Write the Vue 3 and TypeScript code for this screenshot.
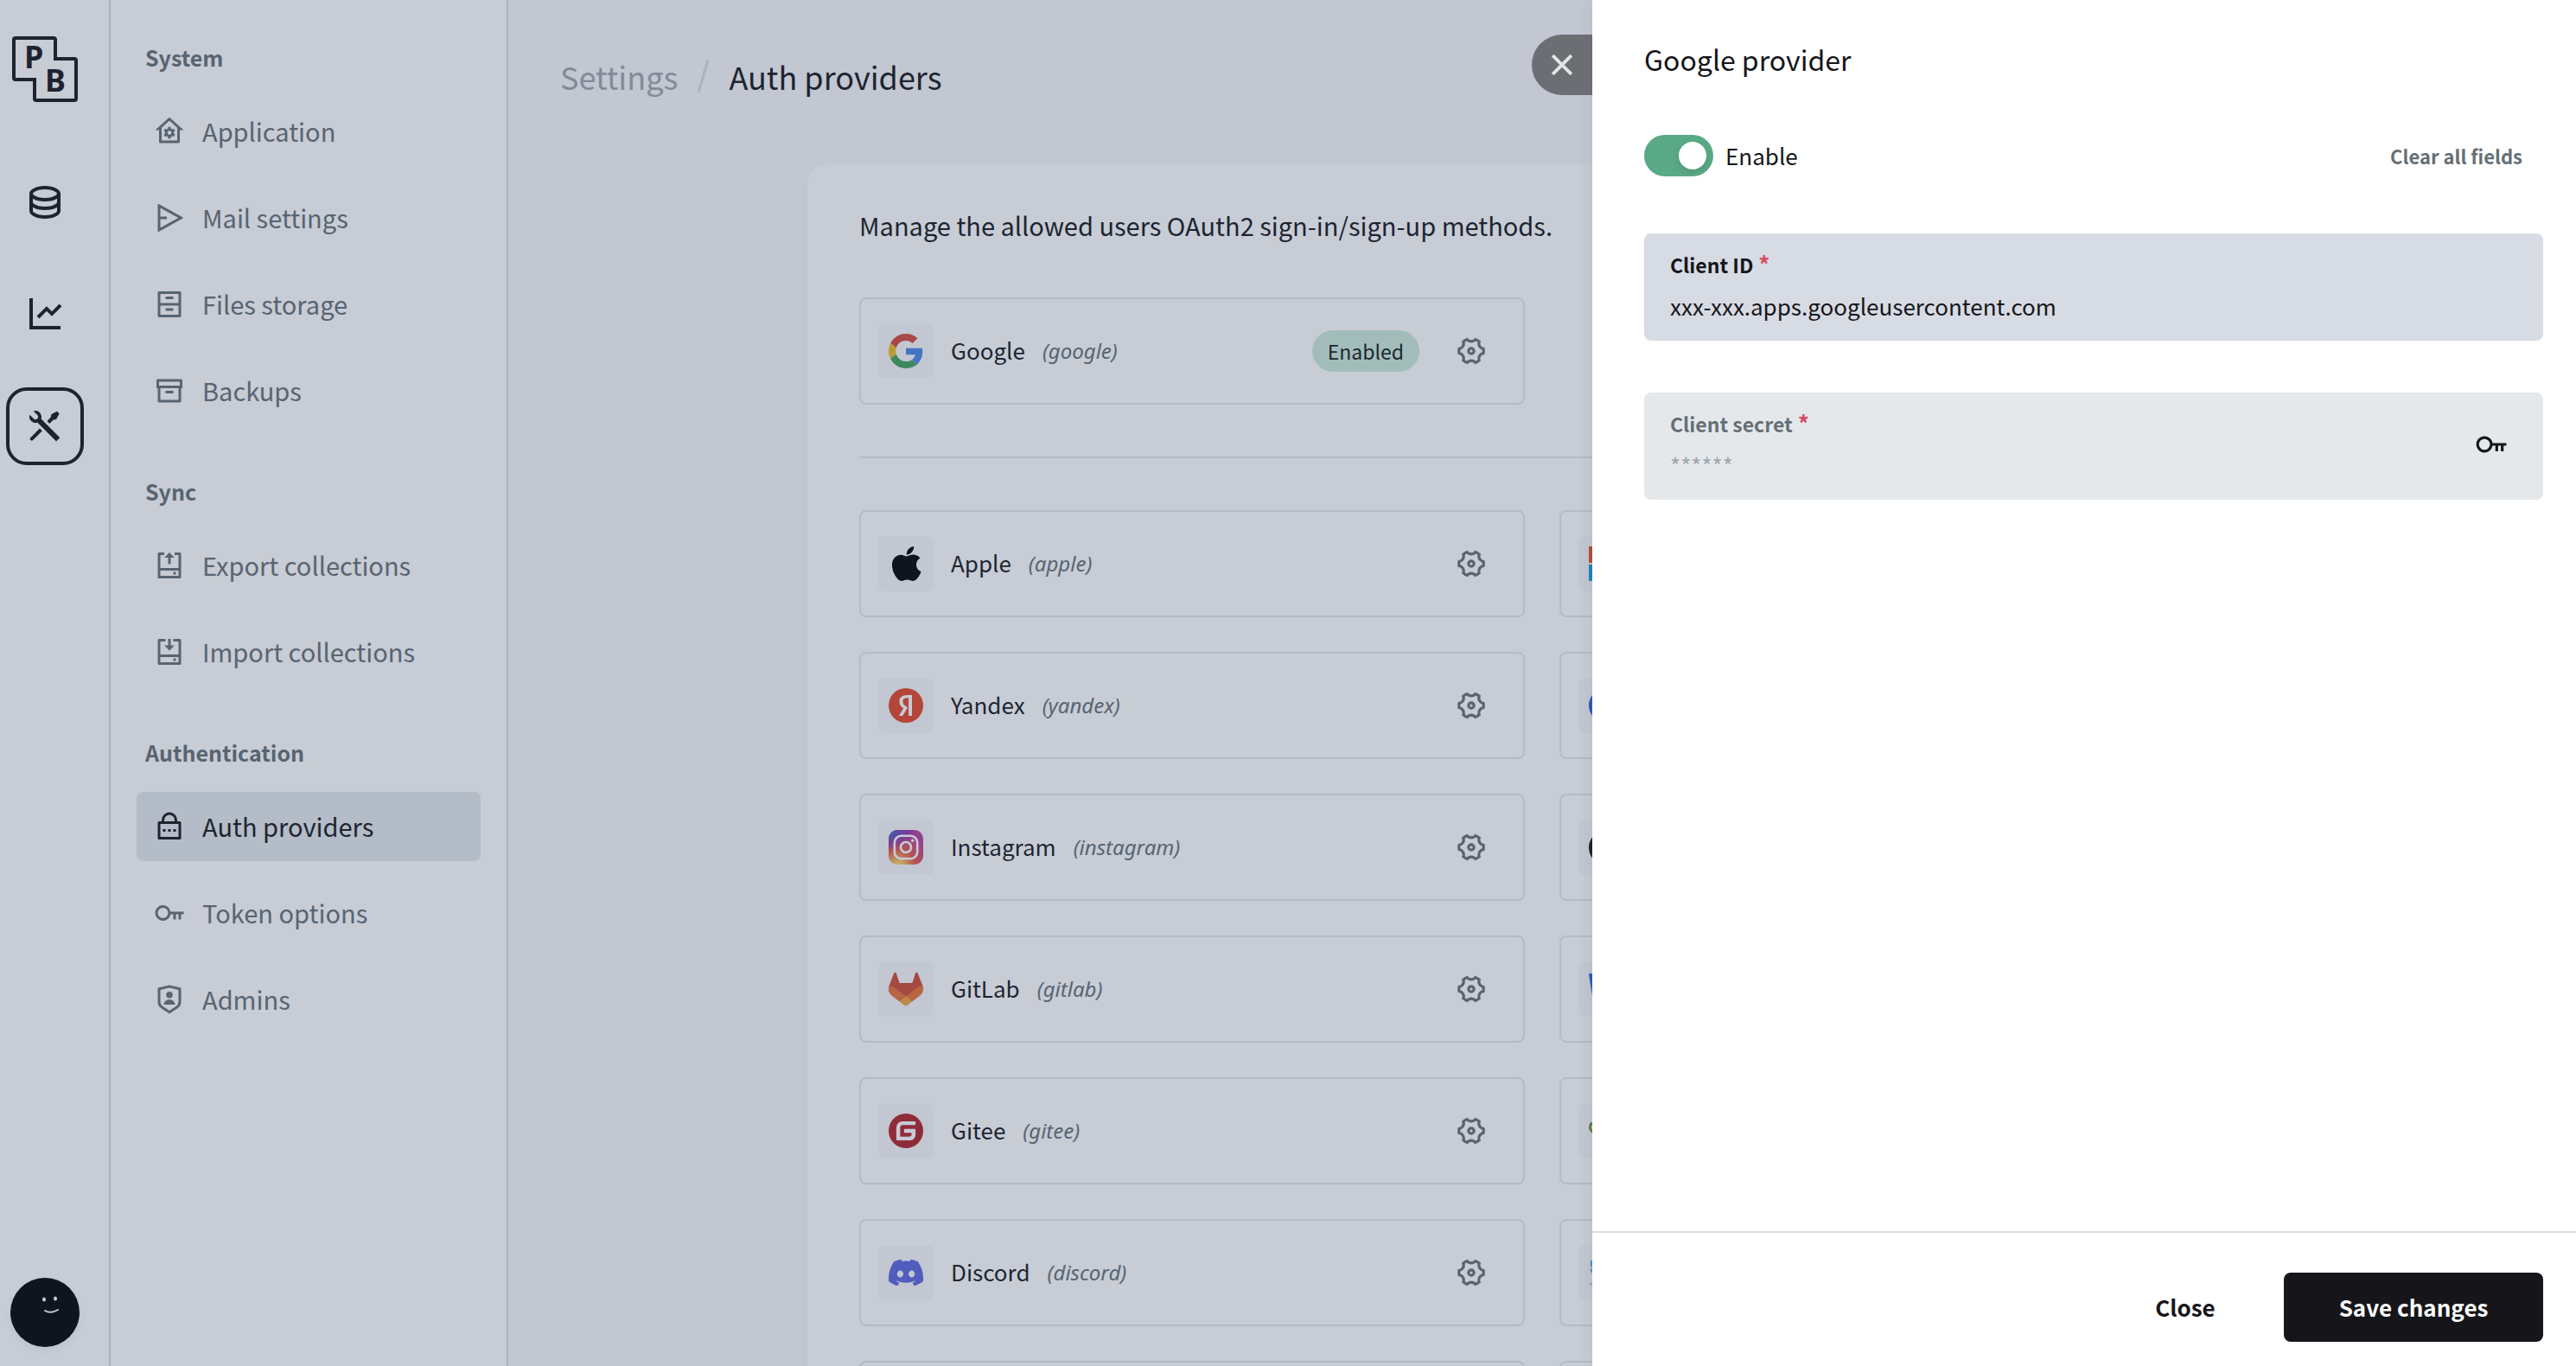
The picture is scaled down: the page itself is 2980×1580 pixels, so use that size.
<script setup lang="ts">
import { ref } from 'vue'

interface Shape {
  d: string
  fill: string
}

interface Provider {
  title: string
  key: string
  viewBox: string
  shapes: Shape[]
  enabled?: boolean
}

interface NavItem {
  label: string
  icon: string
  active?: boolean
}

interface NavGroup {
  title: string
  items: NavItem[]
}

const keyIcon =
  'M12.917 13A6.002 6.002 0 0 1 1 12a6 6 0 0 1 11.917-1H23v2h-2v4h-2v-4h-2v4h-2v-4h-2.083zM7 16a4 4 0 1 0 0-8 4 4 0 0 0 0 8z'

const gearIcon =
  'M2 12c0-.865.11-1.703.316-2.504A3 3 0 0 0 4.99 4.867a9.99 9.99 0 0 1 4.335-2.505 3 3 0 0 0 5.348 0 9.99 9.99 0 0 1 4.335 2.505 3 3 0 0 0 2.675 4.63c.206.8.316 1.638.316 2.503 0 .865-.11 1.703-.316 2.504a3 3 0 0 0-2.675 4.629 9.99 9.99 0 0 1-4.335 2.505 3 3 0 0 0-5.348 0 9.99 9.99 0 0 1-4.335-2.505 3 3 0 0 0-2.675-4.63C2.11 13.704 2 12.866 2 12zm4.804 3c.63 1.091.81 2.346.564 3.524.408.29.842.541 1.297.75A4.993 4.993 0 0 1 12 18c1.26 0 2.438.471 3.335 1.274.455-.209.889-.46 1.297-.75A4.993 4.993 0 0 1 17.196 15a4.993 4.993 0 0 1 2.77-2.25 8.126 8.126 0 0 0 0-1.5A4.993 4.993 0 0 1 17.195 9a4.993 4.993 0 0 1-.564-3.524 7.989 7.989 0 0 0-1.297-.75A4.993 4.993 0 0 1 12 6a4.993 4.993 0 0 1-3.335-1.274 7.99 7.99 0 0 0-1.297.75A4.993 4.993 0 0 1 6.804 9a4.993 4.993 0 0 1-2.77 2.25 8.126 8.126 0 0 0 0 1.5A4.993 4.993 0 0 1 6.805 15zM12 15a3 3 0 1 1 0-6 3 3 0 0 1 0 6zm0-2a1 1 0 1 0 0-2 1 1 0 0 0 0 2z'

const mainNav = [
  {
    label: 'Collections',
    icon: 'M5 12.5c0 .313.461.858 1.53 1.393C7.914 14.585 9.877 15 12 15c2.123 0 4.086-.415 5.47-1.107 1.069-.535 1.53-1.08 1.53-1.393v-2.171C17.35 11.349 14.827 12 12 12s-5.35-.652-7-1.671V12.5zm14 2.829C17.35 16.349 14.827 17 12 17s-5.35-.652-7-1.671V17.5c0 .313.461.858 1.53 1.393C7.914 19.585 9.877 20 12 20c2.123 0 4.086-.415 5.47-1.107 1.069-.535 1.53-1.08 1.53-1.393v-2.171zM3 17.5v-10C3 5.015 7.03 3 12 3s9 2.015 9 4.5v10c0 2.485-4.03 4.5-9 4.5s-9-2.015-9-4.5zm9-7.5c2.123 0 4.086-.415 5.47-1.107C18.539 8.358 19 7.813 19 7.5c0-.313-.461-.858-1.53-1.393C16.086 5.415 14.123 5 12 5c-2.123 0-4.086.415-5.47 1.107C5.461 6.642 5 7.187 5 7.5c0 .313.461.858 1.53 1.393C7.914 9.585 9.877 10 12 10z',
  },
  {
    label: 'Logs',
    icon: 'M5 3v16h16v2H3V3h2zm15.293 3.293l1.414 1.414L16 13.414l-3-2.999-4.293 4.292-1.414-1.414L13 7.586l3 2.999 4.293-4.292z',
  },
  {
    label: 'Settings',
    icon: 'M5.329 3.271a3.5 3.5 0 0 1 4.472 4.474L20.647 18.59l-2.122 2.121L7.68 9.867a3.5 3.5 0 0 1-4.472-4.474L5.444 7.63a1.5 1.5 0 1 0 2.121-2.121L5.329 3.27zm10.367 1.884l3.182-1.768 1.414 1.414-1.768 3.182-1.768.354-2.12 2.121-1.415-1.414 2.121-2.121.354-1.768zm-6.718 8.132l1.414 1.414-5.303 5.303a1 1 0 0 1-1.492-1.327l.078-.087 5.303-5.303z',
    active: true,
  },
]

const settingsNav: NavGroup[] = [
  {
    title: 'System',
    items: [
      {
        label: 'Application',
        icon: 'M19 21H5a1 1 0 0 1-1-1v-9H1l10.327-9.388a1 1 0 0 1 1.346 0L23 11h-3v9a1 1 0 0 1-1 1zM6 19h12V9.157l-6-5.454-6 5.454V19zm2.591-5.191a3.508 3.508 0 0 1 0-1.622l-.991-.572 1-1.732.991.573a3.495 3.495 0 0 1 1.404-.812V8.5h2v1.144c.532.159 1.01.44 1.404.812l.991-.573 1 1.731-.991.573a3.508 3.508 0 0 1 0 1.622l.991.572-1 1.731-.991-.572a3.495 3.495 0 0 1-1.404.811v1.145h-2V16.35a3.495 3.495 0 0 1-1.404-.811l-.991.572-1-1.73.991-.573zm3.404.688a1.5 1.5 0 1 0 0-2.998 1.5 1.5 0 0 0 0 2.998z',
      },
      {
        label: 'Mail settings',
        icon: 'M3.741 1.408l18.462 10.154a.5.5 0 0 1 0 .876L3.741 22.592A.5.5 0 0 1 3 22.154V1.846a.5.5 0 0 1 .741-.438zM5 13v6.617L18.85 12 5 4.383V11h5v2H5z',
      },
      {
        label: 'Files storage',
        icon: 'M3 2.992C3 2.444 3.445 2 3.993 2h16.014a1 1 0 0 1 .993.992v18.016a.993.993 0 0 1-.993.992H3.993A1 1 0 0 1 3 21.008V2.992zM19 11V4H5v7h14zm0 2H5v7h14v-7zM9 6h6v2H9V6zm0 9h6v2H9v-2z',
      },
      {
        label: 'Backups',
        icon: 'M3 10H2V4.003C2 3.449 2.455 3 2.992 3h18.016A.99.99 0 0 1 22 4.003V10h-1v10.001a.996.996 0 0 1-.993.999H3.993A.996.996 0 0 1 3 20.001V10zm16 0H5v9h14v-9zM4 5v3h16V5H4zm5 7h6v2H9v-2z',
      },
    ],
  },
  {
    title: 'Sync',
    items: [
      {
        label: 'Export collections',
        icon: 'M8 2v2H5l-.001 10h14L19 4h-3V2h4a1 1 0 0 1 1 1v18a1 1 0 0 1-1 1H4a1 1 0 0 1-1-1V3a1 1 0 0 1 1-1h4zm10.999 14h-14L5 20h14l-.001-4zM17 17v2h-2v-2h2zM12 2l4 4h-3v5h-2V6H8l4-4z',
      },
      {
        label: 'Import collections',
        icon: 'M9 2v2H5l-.001 10h14L19 4h-4V2h5a1 1 0 0 1 1 1v18a1 1 0 0 1-1 1H4a1 1 0 0 1-1-1V3a1 1 0 0 1 1-1h5zm9.999 14h-14L5 20h14l-.001-4zM17 17v2h-2v-2h2zM13 2v5h3l-4 4-4-4h3V2h2z',
      },
    ],
  },
  {
    title: 'Authentication',
    items: [
      {
        label: 'Auth providers',
        icon: 'M18 8h2a1 1 0 0 1 1 1v12a1 1 0 0 1-1 1H4a1 1 0 0 1-1-1V9a1 1 0 0 1 1-1h2V7a6 6 0 1 1 12 0v1zM5 10v10h14V10H5zm6 4h2v2h-2v-2zm-4 0h2v2H7v-2zm8 0h2v2h-2v-2zm1-6V7a4 4 0 1 0-8 0v1h8z',
        active: true,
      },
      { label: 'Token options', icon: keyIcon },
      {
        label: 'Admins',
        icon: 'M3.783 2.826L12 1l8.217 1.826a1 1 0 0 1 .783.976v9.987a6 6 0 0 1-2.672 4.992L12 23l-6.328-4.219A6 6 0 0 1 3 13.79V3.802a1 1 0 0 1 .783-.976zM5 4.604v9.185a4 4 0 0 0 1.781 3.328L12 20.597l5.219-3.48A4 4 0 0 0 19 13.79V4.604L12 3.05 5 4.604zM12 11a2.5 2.5 0 1 1 0-5 2.5 2.5 0 0 1 0 5zm-4.473 5a4.5 4.5 0 0 1 8.946 0H7.527z',
      },
    ],
  },
]

const google: Provider = {
  title: 'Google',
  key: 'google',
  viewBox: '0 0 48 48',
  enabled: true,
  shapes: [
    { fill: '#ea4335', d: 'M24 9.5c3.54 0 6.71 1.22 9.21 3.6l6.85-6.85C35.9 2.38 30.47 0 24 0 14.62 0 6.51 5.38 2.56 13.22l7.98 6.19C12.43 13.72 17.74 9.5 24 9.5z' },
    { fill: '#4285f4', d: 'M46.98 24.55c0-1.57-.15-3.09-.38-4.55H24v9.02h12.94c-.58 2.96-2.26 5.48-4.78 7.18l7.73 6c4.51-4.18 7.09-10.36 7.09-17.65z' },
    { fill: '#fbbc05', d: 'M10.53 28.59c-.48-1.45-.76-2.99-.76-4.59s.27-3.14.76-4.59l-7.98-6.19C.92 16.46 0 20.12 0 24c0 3.88.92 7.54 2.56 10.78l7.97-6.19z' },
    { fill: '#34a853', d: 'M24 48c6.48 0 11.93-2.13 15.89-5.81l-7.73-6c-2.15 1.45-4.92 2.3-8.16 2.3-6.26 0-11.57-4.22-13.47-9.91l-7.98 6.19C6.51 42.62 14.62 48 24 48z' },
  ],
}

const providers: Provider[] = [
  {
    title: 'Apple',
    key: 'apple',
    viewBox: '-40 32 448 448',
    shapes: [{ fill: '#000', d: 'M318.7 268.7c-.2-36.7 16.4-64.4 50-84.8-18.8-26.9-47.2-41.7-84.7-44.6-35.5-2.8-74.3 20.7-88.5 20.7-15 0-49.4-19.7-76.4-19.7C63.3 141.2 4 184.8 4 273.5q0 39.3 14.4 81.2c12.8 36.7 59 126.7 107.2 125.2 25.2-.6 43-17.9 75.8-17.9 31.8 0 48.3 17.9 76.4 17.9 48.6-.7 90.4-82.5 102.6-119.3-65.2-30.7-61.7-90-61.7-91.9zm-56.6-164.2c27.3-32.4 24.8-61.9 24-72.5-24.1 1.4-52 16.4-67.9 34.9-17.5 19.8-27.8 44.3-25.6 71.9 26.1 2 49.9-11.4 69.5-34.3z' }],
  },
  {
    title: 'Microsoft',
    key: 'microsoft',
    viewBox: '0 0 40 40',
    shapes: [
      { fill: '#f25022', d: 'M0 0h19v19H0z' },
      { fill: '#7fba00', d: 'M21 0h19v19H21z' },
      { fill: '#00a4ef', d: 'M0 21h19v19H0z' },
      { fill: '#ffb900', d: 'M21 21h19v19H21z' },
    ],
  },
  {
    title: 'Yandex',
    key: 'yandex',
    viewBox: '0 0 40 40',
    shapes: [
      { fill: '#fc3f1d', d: 'M20 0a20 20 0 1 1 0 40 20 20 0 0 1 0-40z' },
      { fill: '#fff', d: 'M27 8v24h-3.9V11.2h-1.8c-3.2 0-4.9 1.6-4.9 4 0 2.7 1.2 4 3.6 5.6l2 1.4-5.8 9.8h-4.4l5.4-8.7c-3-2.2-4.8-4.3-4.8-7.9C12.4 10.9 15.6 8 21.2 8z' },
    ],
  },
  {
    title: 'Facebook',
    key: 'facebook',
    viewBox: '0 0 24 24',
    shapes: [{ fill: '#2a62e4', d: 'M24 12.073c0-6.627-5.373-12-12-12s-12 5.373-12 12c0 5.99 4.388 10.954 10.125 11.854v-8.385H7.078v-3.47h3.047V9.43c0-3.007 1.792-4.669 4.533-4.669 1.312 0 2.686.235 2.686.235v2.953H15.83c-1.491 0-1.956.925-1.956 1.874v2.25h3.328l-.532 3.47h-2.796v8.385C19.612 23.027 24 18.062 24 12.073z' }],
  },
  {
    title: 'Instagram',
    key: 'instagram',
    viewBox: '0 0 40 40',
    shapes: [
      { fill: 'url(#instagram-warm)', d: 'M10 0h20a10 10 0 0 1 10 10v20a10 10 0 0 1-10 10H10A10 10 0 0 1 0 30V10A10 10 0 0 1 10 0z' },
      { fill: 'url(#instagram-cool)', d: 'M10 0h20a10 10 0 0 1 10 10v20a10 10 0 0 1-10 10H10A10 10 0 0 1 0 30V10A10 10 0 0 1 10 0z' },
      { fill: '#fff', d: 'M14.500 5.500h11a9 9 0 0 1 9 9v11a9 9 0 0 1-9 9h-11a9 9 0 0 1-9-9v-11a9 9 0 0 1 9-9zm0 2.600a6.400 6.400 0 0 0-6.400 6.400v11a6.400 6.400 0 0 0 6.400 6.400h11a6.400 6.400 0 0 0 6.400-6.400v-11a6.400 6.400 0 0 0-6.400-6.400zM20 12.700a7.300 7.300 0 1 1 0 14.600 7.300 7.300 0 0 1 0-14.600zm0 2.600a4.700 4.700 0 1 0 0 9.400 4.700 4.700 0 0 0 0-9.400zM27.700 10.600a1.700 1.700 0 1 1 0 3.400 1.700 1.700 0 0 1 0-3.400z' },
    ],
  },
  {
    title: 'GitHub',
    key: 'github',
    viewBox: '0 0 24 24',
    shapes: [{ fill: '#191717', d: 'M12 .297c-6.63 0-12 5.373-12 12 0 5.303 3.438 9.8 8.205 11.385.6.113.82-.258.82-.577 0-.285-.01-1.04-.015-2.04-3.338.724-4.042-1.61-4.042-1.61C4.422 18.07 3.633 17.7 3.633 17.7c-1.087-.744.084-.729.084-.729 1.205.084 1.838 1.236 1.838 1.236 1.07 1.835 2.809 1.305 3.495.998.108-.776.417-1.305.76-1.605-2.665-.3-5.466-1.332-5.466-5.93 0-1.31.465-2.38 1.235-3.22-.135-.303-.54-1.523.105-3.176 0 0 1.005-.322 3.3 1.23.96-.267 1.98-.399 3-.405 1.02.006 2.04.138 3 .405 2.28-1.552 3.285-1.23 3.285-1.23.645 1.653.24 2.873.12 3.176.765.84 1.23 1.91 1.23 3.22 0 4.61-2.805 5.625-5.475 5.92.42.36.81 1.096.81 2.22 0 1.606-.015 2.896-.015 3.286 0 .315.21.69.825.57C20.565 22.092 24 17.592 24 12.297c0-6.627-5.373-12-12-12' }],
  },
  {
    title: 'GitLab',
    key: 'gitlab',
    viewBox: '0 0 25 24',
    shapes: [
      { fill: '#e24329', d: 'M24.507 9.5l-.034-.09L21.082.562a.896.896 0 0 0-1.694.091l-2.29 7.01H7.825L5.535.653a.898.898 0 0 0-1.694-.09L.451 9.411.416 9.5a6.297 6.297 0 0 0 2.09 7.278l.012.01.03.022 5.16 3.867 2.56 1.935 1.554 1.176a1.051 1.051 0 0 0 1.268 0l1.555-1.176 2.56-1.935 5.197-3.89.014-.01A6.297 6.297 0 0 0 24.507 9.5z' },
      { fill: '#fc6d26', d: 'M24.507 9.5l-.034-.09a11.44 11.44 0 0 0-4.56 2.051l-7.447 5.632 4.742 3.584 5.197-3.89.014-.01A6.297 6.297 0 0 0 24.507 9.5z' },
      { fill: '#fca326', d: 'M7.707 20.677l2.56 1.935 1.555 1.176a1.051 1.051 0 0 0 1.268 0l1.555-1.176 2.56-1.935-4.743-3.584-4.755 3.584z' },
      { fill: '#fc6d26', d: 'M5.01 11.461a11.43 11.43 0 0 0-4.56-2.05L.416 9.5a6.297 6.297 0 0 0 2.09 7.278l.012.01.03.022 5.16 3.867 4.745-3.584-7.444-5.632z' },
    ],
  },
  {
    title: 'Bitbucket',
    key: 'bitbucket',
    viewBox: '0 0 24 24',
    shapes: [{ fill: '#2a62e4', d: 'M.778 1.213a.768.768 0 00-.768.892l3.263 19.81c.084.5.515.868 1.022.873H19.95a.772.772 0 00.77-.646l3.27-20.03a.768.768 0 00-.768-.891zM14.52 15.53H9.522L8.17 8.466h7.561z' }],
  },
  {
    title: 'Gitee',
    key: 'gitee',
    viewBox: '0 0 24 24',
    shapes: [
      { fill: '#fff', d: 'M12 1a11 11 0 1 1 0 22 11 11 0 0 1 0-22z' },
      { fill: '#c71d23', d: 'M11.984 0A12 12 0 0 0 0 12a12 12 0 0 0 12 12 12 12 0 0 0 12-12A12 12 0 0 0 12 0a12 12 0 0 0-.016 0zm6.09 5.333c.328 0 .593.266.592.593v1.482a.594.594 0 0 1-.593.592H9.777c-.982 0-1.778.796-1.778 1.778v5.63c0 .327.266.592.593.592h5.63c.982 0 1.778-.796 1.778-1.778v-.296a.593.593 0 0 0-.592-.593h-4.15a.592.592 0 0 1-.592-.592v-1.482a.593.593 0 0 1 .593-.592h6.815c.327 0 .593.265.593.592v3.408a4 4 0 0 1-4 4H5.926a.593.593 0 0 1-.593-.593V9.778a4.444 4.444 0 0 1 4.445-4.444h8.296z' },
    ],
  },
  {
    title: 'Gitea',
    key: 'gitea',
    viewBox: '0 0 40 40',
    shapes: [{ fill: '#609926', d: 'M7 9h31v4c0 9-3 18-8 18H18c-4 0-6-4-7-7-6 0-11-3-11-8s3-7 7-7zm1 3c-3 0-5 1-5 4s3 5 7 5z' }],
  },
  {
    title: 'Discord',
    key: 'discord',
    viewBox: '0 0 24 24',
    shapes: [{ fill: '#5865f2', d: 'M20.317 4.3698a19.7913 19.7913 0 00-4.8851-1.5152.0741.0741 0 00-.0785.0371c-.211.3753-.4447.8648-.6083 1.2495-1.8447-.2762-3.68-.2762-5.4868 0-.1636-.3933-.4058-.8742-.6177-1.2495a.077.077 0 00-.0785-.037 19.7363 19.7363 0 00-4.8852 1.515.0699.0699 0 00-.0321.0277C.5334 9.0458-.319 13.5799.0992 18.0578a.0824.0824 0 00.0312.0561c2.0528 1.5076 4.0413 2.4228 5.9929 3.0294a.0777.0777 0 00.0842-.0276c.4616-.6304.8731-1.2952 1.226-1.9942a.076.076 0 00-.0416-.1057c-.6528-.2476-1.2743-.5495-1.8722-.8923a.077.077 0 01-.0076-.1277c.1258-.0943.2517-.1923.3718-.2914a.0743.0743 0 01.0776-.0105c3.9278 1.7933 8.18 1.7933 12.0614 0a.0739.0739 0 01.0785.0095c.1202.099.246.1981.3728.2924a.077.077 0 01-.0066.1276 12.2986 12.2986 0 01-1.873.8914.0766.0766 0 00-.0407.1067c.3604.698.7719 1.3628 1.225 1.9932a.076.076 0 00.0842.0286c1.961-.6067 3.9495-1.5219 6.0023-3.0294a.077.077 0 00.0313-.0552c.5004-5.177-.8382-9.6739-3.5485-13.6604a.061.061 0 00-.0312-.0286zM8.02 15.3312c-1.1825 0-2.1569-1.0857-2.1569-2.419 0-1.3332.9555-2.4189 2.157-2.4189 1.2108 0 2.1757 1.0952 2.1568 2.419 0 1.3332-.9555 2.4189-2.1569 2.4189zm7.9748 0c-1.1825 0-2.1569-1.0857-2.1569-2.419 0-1.3332.9554-2.4189 2.1569-2.4189 1.2108 0 2.1757 1.0952 2.1568 2.419 0 1.3332-.946 2.4189-2.1568 2.4189Z' }],
  },
  {
    title: 'Twitter',
    key: 'twitter',
    viewBox: '0 0 24 24',
    shapes: [{ fill: '#55acee', d: 'M23.953 4.57a10 10 0 01-2.825.775 4.958 4.958 0 002.163-2.723c-.951.555-2.005.959-3.127 1.184a4.92 4.92 0 00-8.384 4.482C7.69 8.095 4.067 6.13 1.64 3.162a4.822 4.822 0 00-.666 2.475c0 1.71.87 3.213 2.188 4.096a4.904 4.904 0 01-2.228-.616v.06a4.923 4.923 0 003.946 4.827 4.996 4.996 0 01-2.212.085 4.936 4.936 0 004.604 3.417 9.867 9.867 0 01-6.102 2.105c-.39 0-.779-.023-1.17-.067a13.995 13.995 0 007.557 2.209c9.053 0 13.998-7.496 13.998-13.985 0-.21 0-.42-.015-.63A9.935 9.935 0 0024 4.59z' }],
  },
]

// Cards that are still waiting for their data.
const pending = 2

const enabled = ref(true)
const clientId = ref('xxx-xxx.apps.googleusercontent.com')
const clientSecret = ref('')

function clearFields() {
  clientId.value = ''
  clientSecret.value = ''
}
</script>

<template>
  <div class="app">
    <aside class="rail">
      <a href="#" class="logo" aria-label="Home">
        <svg viewBox="0 0 76 76" aria-hidden="true">
          <path
            d="M26 50H4a2 2 0 0 1-2-2V4a2 2 0 0 1 2-2h44a2 2 0 0 1 2 2v22h22a2 2 0 0 1 2 2v44a2 2 0 0 1-2 2H28a2 2 0 0 1-2-2V50z"
            fill="none"
            stroke="currentColor"
            stroke-width="4"
          />
          <text x="14" y="37">P</text>
          <text x="38" y="64">B</text>
        </svg>
      </a>
      <nav class="rail-nav" aria-label="Main">
        <a
          v-for="item in mainNav"
          :key="item.label"
          href="#"
          class="rail-link"
          :class="{ active: item.active }"
          :aria-label="item.label"
        >
          <svg viewBox="0 0 24 24" aria-hidden="true"><path :d="item.icon" /></svg>
        </a>
      </nav>
      <button type="button" class="avatar" aria-label="Account">
        <svg viewBox="0 0 80 80" aria-hidden="true">
          <ellipse cx="39" cy="25" rx="2" ry="2.500" fill="#fff" />
          <ellipse cx="52" cy="24" rx="2" ry="2.500" fill="#fff" />
          <path d="M40 38q7 4 15-1" fill="none" stroke="#fff" stroke-width="2" stroke-linecap="round" />
        </svg>
      </button>
    </aside>

    <aside class="sidebar">
      <nav v-for="group in settingsNav" :key="group.title" class="group" :aria-label="group.title">
        <h2 class="group-title">{{ group.title }}</h2>
        <a
          v-for="item in group.items"
          :key="item.label"
          href="#"
          class="side-link"
          :class="{ active: item.active }"
        >
          <svg viewBox="0 0 24 24" aria-hidden="true"><path fill-rule="evenodd" :d="item.icon" /></svg>
          <span>{{ item.label }}</span>
        </a>
      </nav>
    </aside>

    <main class="page">
      <header class="crumbs">
        <span class="crumb">Settings</span>
        <span class="slash" aria-hidden="true"></span>
        <h1 class="crumb current">Auth providers</h1>
      </header>

      <section class="card">
        <p class="intro">Manage the allowed users OAuth2 sign-in/sign-up methods.</p>
        <div
          v-for="(list, index) in [[google], providers]"
          :key="index"
          class="grid"
          :class="{ divided: index > 0 }"
        >
          <article v-for="provider in list" :key="provider.key" class="provider">
            <figure class="provider-logo">
              <svg :viewBox="provider.viewBox" aria-hidden="true">
                <defs v-if="provider.key === 'instagram'">
                  <radialGradient id="instagram-warm" cx="0.27" cy="1.08" r="1">
                    <stop offset="0" stop-color="#fd5" />
                    <stop offset="0.1" stop-color="#fd5" />
                    <stop offset="0.5" stop-color="#ff543e" />
                    <stop offset="1" stop-color="#c837ab" />
                  </radialGradient>
                  <radialGradient id="instagram-cool" cx="-0.1" cy="0" r="0.9" gradientTransform="scale(1 0.7)">
                    <stop offset="0" stop-color="#3771c8" />
                    <stop offset="0.2" stop-color="#3771c8" />
                    <stop offset="1" stop-color="#60f" stop-opacity="0" />
                  </radialGradient>
                </defs>
                <path v-for="(shape, i) in provider.shapes" :key="i" :d="shape.d" :fill="shape.fill" fill-rule="evenodd" />
              </svg>
            </figure>
            <span class="provider-name">{{ provider.title }}</span>
            <em class="provider-key">({{ provider.key }})</em>
            <span v-if="provider.enabled" class="badge">Enabled</span>
            <button type="button" class="gear" :aria-label="`${provider.title} settings`">
              <svg viewBox="0 0 24 24" aria-hidden="true"><path :d="gearIcon" /></svg>
            </button>
          </article>
          <template v-if="index > 0">
            <article v-for="n in pending" :key="n" class="provider" aria-busy="true"></article>
          </template>
        </div>
      </section>
    </main>

    <div class="overlay"></div>

    <form class="drawer" @submit.prevent>
      <button type="button" class="dismiss" aria-label="Close panel">
        <svg viewBox="0 0 24 24" aria-hidden="true">
          <path d="M12 10.586l4.95-4.95 1.414 1.414-4.95 4.95 4.95 4.95-1.414 1.414-4.95-4.95-4.95 4.95-1.414-1.414 4.95-4.95-4.95-4.95L7.05 5.636z" />
        </svg>
      </button>

      <h2 class="drawer-title">Google provider</h2>

      <div class="drawer-body">
        <div class="toolbar">
          <label class="toggle" for="provider-enabled">
            <input id="provider-enabled" v-model="enabled" type="checkbox" />
            <span>Enable</span>
          </label>
          <button type="button" class="clear" @click="clearFields">Clear all fields</button>
        </div>

        <div class="field focused">
          <div class="field-main">
            <label for="client-id">Client ID<span class="required">*</span></label>
            <input id="client-id" v-model="clientId" type="text" />
          </div>
        </div>

        <div class="field">
          <div class="field-main">
            <label for="client-secret">Client secret<span class="required">*</span></label>
            <input id="client-secret" v-model="clientSecret" type="password" placeholder="******" />
          </div>
          <button type="button" class="reveal" aria-label="Set secret">
            <svg viewBox="0 0 24 24" aria-hidden="true"><path :d="keyIcon" /></svg>
          </button>
        </div>
      </div>

      <footer class="drawer-footer">
        <button type="button" class="btn">Close</button>
        <button type="submit" class="btn primary">Save changes</button>
      </footer>
    </form>
  </div>
</template>

<style>
body {
  margin: 0;
  background: #f8f9fa;
}
</style>

<style scoped>
* {
  box-sizing: border-box;
}

.app {
  position: relative;
  display: flex;
  height: 100vh;
  overflow: hidden;
  font-family: 'Noto Sans CJK SC', 'Noto Sans', sans-serif;
  font-size: 26px;
  line-height: 40px;
  color: #16161a;
}

button,
input {
  margin: 0;
  padding: 0;
  border: 0;
  outline: 0;
  background: transparent;
  font: inherit;
  color: inherit;
}

a {
  color: inherit;
  text-decoration: none;
}

h1,
h2,
p,
figure {
  margin: 0;
}

svg {
  display: block;
  fill: currentColor;
}

.rail {
  display: flex;
  flex-direction: column;
  flex-shrink: 0;
  align-items: center;
  width: 128px;
  padding: 42px 22px 22px 0;
  border-right: 2px solid #d7dde4;
  background: #fff;
}

.logo svg {
  width: 76px;
  height: 76px;
}

.logo text {
  font-family: 'Noto Sans', sans-serif;
  font-size: 36px;
  font-weight: 700;
}

.rail-nav {
  display: flex;
  flex-direction: column;
  gap: 40px;
  margin-top: 70px;
}

.rail-link {
  display: flex;
  align-items: center;
  justify-content: center;
  width: 90px;
  height: 90px;
  border: 4px solid transparent;
  border-radius: 24px;
}

.rail-link.active {
  border-color: #16161a;
}

.rail-link svg {
  width: 48px;
  height: 48px;
}

.avatar {
  width: 80px;
  height: 80px;
  margin-top: auto;
  border-radius: 50%;
  background: #000;
  box-shadow: 0 4px 10px rgba(0, 0, 0, 0.06);
}

.sidebar {
  display: flex;
  flex-direction: column;
  flex-shrink: 0;
  gap: 56px;
  width: 460px;
  padding: 46px 30px;
  border-right: 2px solid #d7dde4;
  background: #fff;
  color: #666f75;
}

.group {
  display: flex;
  flex-direction: column;
  gap: 20px;
}

.group-title {
  padding: 0 10px;
  margin-bottom: 6px;
  font-size: 25px;
  line-height: 40px;
  font-weight: 700;
}

.side-link {
  display: flex;
  align-items: center;
  gap: 20px;
  height: 80px;
  padding: 0 20px;
  border-radius: 8px;
  font-size: 29px;
}

.side-link span,
.provider-name {
  padding-bottom: 2px;
}

.side-link.active {
  background: #e4e9ec;
  color: #16161a;
}

.side-link svg {
  width: 36px;
  height: 36px;
}

.page {
  flex: 1;
  min-width: 0;
  padding: 58px 60px;
  background: #f8f9fa;
}

.crumbs {
  display: flex;
  align-items: center;
  gap: 28px;
  height: 60px;
}

.crumb {
  font-size: 36px;
  line-height: 60px;
  font-weight: 400;
  color: #a0a6ac;
}

.crumb.current {
  color: #16161a;
}

.slash {
  width: 3px;
  height: 40px;
  border-radius: 2px;
  background: #d7dde4;
  transform: rotate(16deg);
}

.card {
  display: flex;
  flex-direction: column;
  gap: 60px;
  max-width: 1700px;
  margin: 72px auto 0;
  padding: 48px 60px 60px;
  border-radius: 24px;
  background: #fff;
  box-shadow: 0 4px 10px rgba(0, 0, 0, 0.04);
}

.intro {
  padding-bottom: 2px;
  font-size: 29px;
  line-height: 44px;
}

.grid {
  display: grid;
  grid-template-columns: repeat(2, minmax(0, 1fr));
  gap: 40px;
}

.grid.divided {
  padding-top: 60px;
  border-top: 2px solid #e4e9ec;
}

.provider {
  display: flex;
  align-items: center;
  gap: 20px;
  height: 124px;
  padding: 0 20px;
  border: 2px solid #e4e9ec;
  border-radius: 8px;
}

.provider-logo {
  display: flex;
  align-items: center;
  justify-content: center;
  width: 64px;
  height: 64px;
  border-radius: 8px;
  background: #f8f9fa;
}

.provider-logo svg {
  width: 40px;
  height: 40px;
  filter: saturate(0.85);
}

.provider-name {
  font-size: 26px;
}

.provider-key {
  font-family: 'Noto Sans', sans-serif;
  font-size: 24px;
  color: #666f75;
}

.badge {
  margin-left: auto;
  padding: 0 18px;
  border-radius: 24px;
  background: #ccebd9;
  font-size: 23px;
  line-height: 48px;
}

.gear {
  display: flex;
  align-items: center;
  justify-content: center;
  width: 80px;
  height: 80px;
  margin-left: auto;
  color: #666f75;
}

.badge + .gear {
  margin-left: 0;
}

.gear svg,
.reveal svg {
  width: 38px;
  height: 38px;
}

.overlay {
  position: absolute;
  inset: 0;
  background: rgba(53, 71, 104, 0.28);
}

.drawer {
  position: absolute;
  inset: 0 0 0 auto;
  display: flex;
  flex-direction: column;
  width: 1138px;
  background: #fff;
  box-shadow: 0 4px 20px rgba(0, 0, 0, 0.08);
}

.dismiss {
  position: absolute;
  top: 40px;
  right: 100%;
  display: flex;
  align-items: center;
  justify-content: center;
  width: 70px;
  height: 70px;
  border-radius: 35px 0 0 35px;
  background: #6d6e74;
  color: #e2e4e8;
}

.dismiss svg {
  width: 46px;
  height: 46px;
}

.drawer-title {
  padding: 40px 38px 0 60px;
  font-size: 32px;
  line-height: 56px;
  font-weight: 400;
}

.drawer-body {
  display: flex;
  flex: 1;
  flex-direction: column;
  gap: 60px;
  padding: 54px 38px 60px 60px;
}

.toolbar {
  display: flex;
  align-items: center;
  justify-content: space-between;
  height: 60px;
}

.toggle {
  display: flex;
  align-items: center;
  gap: 14px;
}

.toggle input {
  appearance: none;
  display: flex;
  align-items: center;
  width: 80px;
  height: 48px;
  padding: 0 8px;
  border-radius: 24px;
  background: #d7dde4;
}

.toggle input::before {
  content: '';
  width: 32px;
  height: 32px;
  border-radius: 50%;
  background: #fff;
  box-shadow: 0 4px 8px rgba(0, 0, 0, 0.1);
}

.toggle input:checked {
  justify-content: flex-end;
  background: #5aa986;
}

.clear {
  padding: 0 24px;
  font-size: 22px;
  font-weight: 700;
  color: #666f75;
}

.field {
  display: flex;
  align-items: center;
  padding: 16px 30px 14px;
  border-radius: 8px;
  background: #e4e8eb;
}

.field.focused {
  background: #d7dbe4;
}

.field-main {
  display: flex;
  flex: 1;
  flex-direction: column;
}

.field label {
  font-size: 23px;
  font-weight: 700;
  color: #666f75;
}

.field.focused label {
  color: #16161a;
}

.field .required {
  margin-left: 6px;
  font-size: 26px;
  line-height: 1;
  color: #d9485f;
}

.field input {
  width: 100%;
  height: 54px;
}

.field input::placeholder {
  color: #a0a6ac;
  opacity: 1;
}

.reveal {
  display: flex;
  align-items: center;
  align-self: flex-start;
  justify-content: center;
  width: 60px;
  height: 88px;
}

.drawer-footer {
  display: flex;
  justify-content: flex-end;
  gap: 40px;
  padding: 46px 38px 28px 60px;
  border-top: 2px solid #d7dde4;
}

.btn {
  min-width: 148px;
  height: 80px;
  border-radius: 8px;
  font-size: 26px;
  font-weight: 700;
}

.btn.primary {
  min-width: 300px;
  background: #16161a;
  color: #fff;
}
</style>
